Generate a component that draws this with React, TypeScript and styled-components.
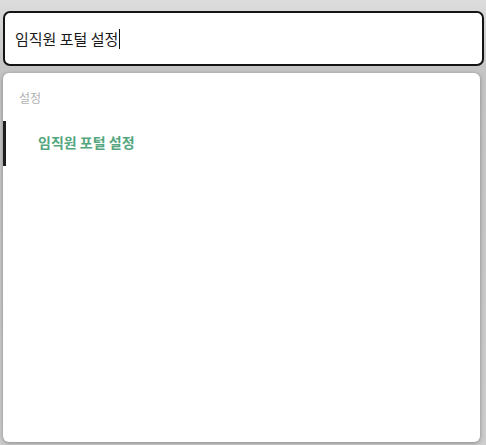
import React from "react";
import styled, { createGlobalStyle } from "styled-components";

const Global = createGlobalStyle`
  html, body { margin: 0; padding: 0; }
  body {
    width: 486px;
    height: 445px;
    overflow: hidden;
    background: linear-gradient(180deg, #dcdcdc 0%, #c4c4c4 16%, #cdcdcd 100%);
    font-family: "Noto Sans CJK KR", "Noto Sans", sans-serif;
  }
`;

const Page = styled.div`
  display: flex;
  flex-direction: column;
  gap: 7px;
  padding: 11px 2px 3px 3px;
  height: 445px;
  box-sizing: border-box;
`;

const SearchBox = styled.div`
  height: 55px;
  box-sizing: border-box;
  border: 2px solid #141414;
  border-radius: 7px;
  background: #ffffff;
  display: flex;
  align-items: center;
  padding: 0 10px;
  font-size: 15px;
  color: #1a1a1a;
`;

const Caret = styled.span`
  display: inline-block;
  width: 1px;
  height: 20px;
  background: #111;
  margin-left: 1px;
`;

const Panel = styled.div`
  flex: 1;
  margin-right: 4px;
  background: #ffffff;
  border-radius: 6px;
  box-shadow: 0 1px 4px rgba(0, 0, 0, 0.35);
  display: flex;
  flex-direction: column;
`;

const GroupLabel = styled.div`
  padding: 16px 16px 14px;
  font-size: 12px;
  line-height: 18px;
  color: #b2b2b2;
`;

const Item = styled.div<{ $active?: boolean }>`
  height: 45px;
  display: flex;
  align-items: center;
  padding-left: 32px;
  padding-bottom: 4px;
  box-sizing: border-box;
  border-left: 3px solid ${(p) => (p.$active ? "#1e1e1e" : "transparent")};
  font-size: 14px;
  font-weight: 700;
  color: #53a67d;
`;

export default function App() {
  return (
    <>
      <Global />
      <Page>
        <SearchBox>
          임직원 포털 설정
          <Caret />
        </SearchBox>
        <Panel>
          <GroupLabel>설정</GroupLabel>
          <Item $active>임직원 포털 설정</Item>
        </Panel>
      </Page>
    </>
  );
}
